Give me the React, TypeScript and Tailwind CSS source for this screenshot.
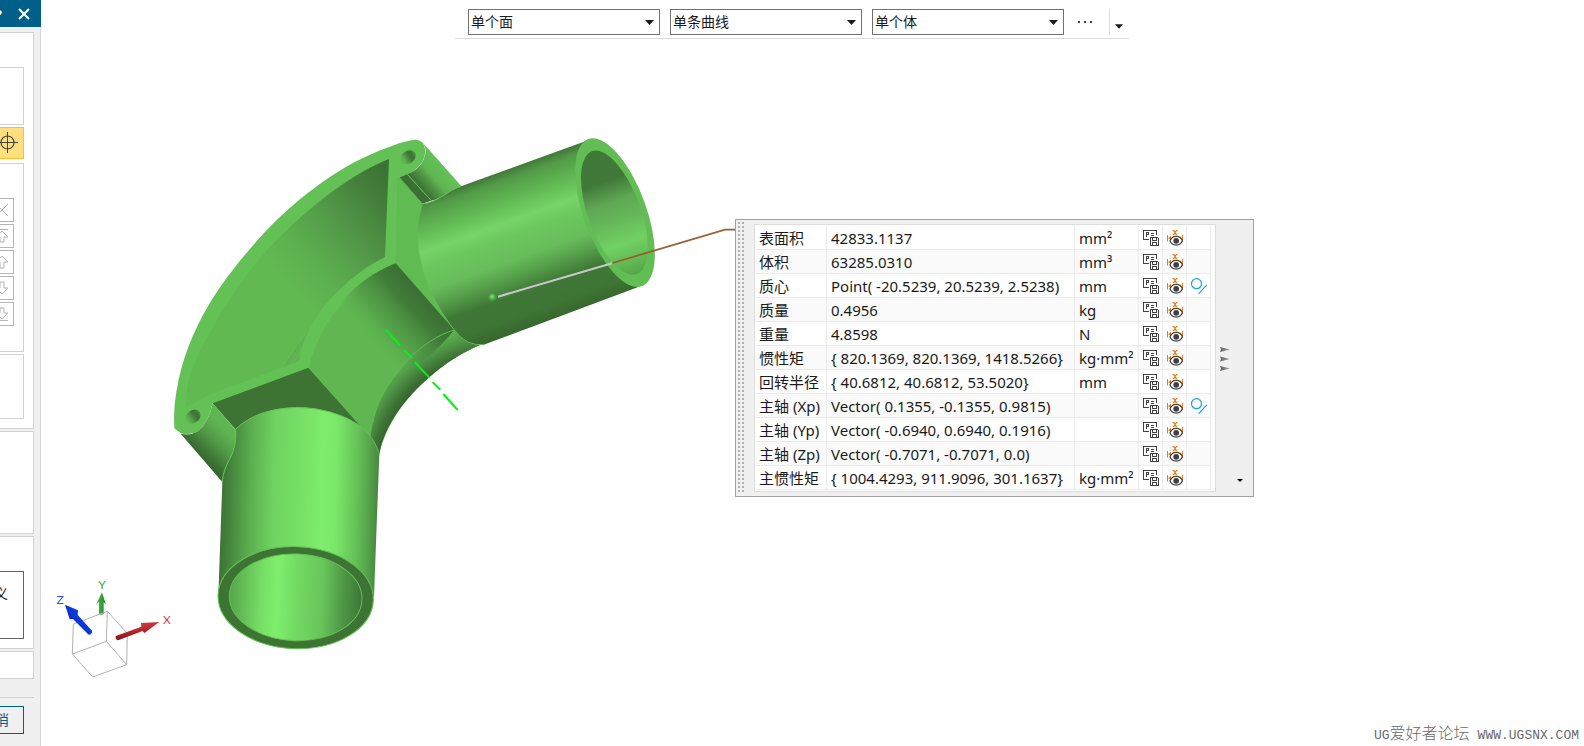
import type { ReactNode } from 'react';

interface Measure {
  name: string;
  value: string;
  unit: string;
  geometry?: boolean;
}

const measures: Measure[] = [
  { name: '表面积', value: '42833.1137', unit: 'mm²' },
  { name: '体积', value: '63285.0310', unit: 'mm³' },
  { name: '质心', value: 'Point( -20.5239, 20.5239, 2.5238)', unit: 'mm', geometry: true },
  { name: '质量', value: '0.4956', unit: 'kg' },
  { name: '重量', value: '4.8598', unit: 'N' },
  { name: '惯性矩', value: '{ 820.1369, 820.1369, 1418.5266}', unit: 'kg·mm²' },
  { name: '回转半径', value: '{ 40.6812, 40.6812, 53.5020}', unit: 'mm' },
  { name: '主轴 (Xp)', value: 'Vector( 0.1355, -0.1355, 0.9815)', unit: '', geometry: true },
  { name: '主轴 (Yp)', value: 'Vector( -0.6940, 0.6940, 0.1916)', unit: '' },
  { name: '主轴 (Zp)', value: 'Vector( -0.7071, -0.7071, 0.0)', unit: '' },
  { name: '主惯性矩', value: '{ 1004.4293, 911.9096, 301.1637}', unit: 'kg·mm²' },
];

const filters = [
  { label: '面规则', value: '单个面' },
  { label: '曲线规则', value: '单条曲线' },
  { label: '体规则', value: '单个体' },
];

/* ---------- icons ---------- */

function SaveExpressionIcon() {
  return (
    <svg width="16" height="16" viewBox="0 0 16 16" fill="none" stroke="#404040" shapeRendering="crispEdges">
      <path d="M6 9.500H.5V.5h13V5" />
      <path d="M3.500 7V2.500h2v2h-2M8 3.500h3M8 5.500h3" />
      <path d="M7.500 7.500h7l1 1v7h-8z" fill="#fff" />
      <path d="M9.500 8v2.500h4V8M9.500 15v-2.500h4V15" />
    </svg>
  );
}

function ShowDimensionIcon() {
  return (
    <svg width="16" height="16" viewBox="0 0 16 16" fill="none">
      <path d="M5.500.6h1.300l2.200 3.800h1.300M10.500.6H9.200L7 4.400H5.700" stroke="#e57c16" strokeWidth="1.100" />
      <path d="M.5 5v6.500M15.500 5v6.500" stroke="#e57c16" />
      <path d="M1 8.200l3-2.400v4.200zM15 8.200l-2-2v4z" fill="#e57c16" />
      <path d="M3 10.800C5.200 5 13 5 15.400 10.800c-2.400 5.700-10.200 5.700-12.400 0z" fill="#fff" stroke="#404040" strokeWidth="1.200" />
      <circle cx="9.200" cy="10.800" r="2.900" fill="#404040" />
    </svg>
  );
}

function GeometryIcon() {
  return (
    <svg width="16" height="16" viewBox="0 0 16 16" fill="none" stroke="#18a8ce" strokeWidth="1.200">
      <circle cx="5.500" cy="5.700" r="5" />
      <path d="M7.600 15.800L15.800 6.800" />
    </svg>
  );
}

function Caret({ className }: { className?: string }) {
  return (
    <svg width="9" height="5" viewBox="0 0 9 5" className={className}>
      <path d="M0 0h9L4.500 5z" fill="#1a1a1a" />
    </svg>
  );
}

/* ---------- dialog at the left edge ---------- */

function OrderButton({ label, children }: { label: string; children: ReactNode }) {
  return (
    <button type="button" aria-label={label} className="flex h-6 w-6 shrink-0 items-center justify-center border border-[#b4b4b4] bg-white">
      <svg width="16" height="16" viewBox="0 0 16 16" fill="none" stroke="#b4b4b4" strokeWidth="1">
        {children}
      </svg>
    </button>
  );
}

function SidePanel() {
  return (
    <aside className="flex w-[41px] shrink-0 flex-col overflow-hidden bg-[#f0f0f0]">
      <div className="flex h-[27px] shrink-0 items-center justify-end gap-4 bg-[#006089] pr-[11px] text-white">
        <button type="button" className="text-[15px] leading-4 font-bold">?</button>
        <button type="button" aria-label="关闭">
          <svg width="12" height="12" viewBox="0 0 12 12" stroke="#fff" strokeWidth="2">
            <path d="M1 1l10 10M11 1L1 11" />
          </svg>
        </button>
      </div>

      <div className="flex grow flex-col border-r border-[#d7d7d7] pt-[5px] pr-[6px]">
        <section className="flex h-[397px] flex-col items-end border-y border-r border-[#d2d2d2] bg-white pt-[34px] pr-[9px]">
          <div className="h-[58px] w-full border-y border-r border-[#d2d2d2]" />
          <button type="button" aria-label="指定点" className="mt-0.5 flex h-8 w-8 shrink-0 items-center justify-center border border-[#ffbe28] bg-[#ffdf7d]">
            <svg width="22" height="22" viewBox="0 0 22 22" fill="none" stroke="#444">
              <circle cx="10.500" cy="10.500" r="6.500" strokeWidth="1.200" />
              <path d="M0 10.500h21M10.500 0v21" />
            </svg>
          </button>
          <div className="mt-1 flex h-[189px] w-full flex-col items-end gap-0.5 border-y border-r border-[#d2d2d2] pt-[34px] pr-[9px]">
            <OrderButton label="移除">
              <path d="M2 2l12 12M14 2L2 14" />
            </OrderButton>
            <OrderButton label="移至顶部">
              <path d="M2 1.500h12M8 3l6 6h-4v5H6V9H2z" />
            </OrderButton>
            <OrderButton label="上移">
              <path d="M8 2l6 6h-4v6H6V8H2z" />
            </OrderButton>
            <OrderButton label="下移">
              <path d="M8 14l6-6h-4V2H6v6H2z" />
            </OrderButton>
            <OrderButton label="移至底部">
              <path d="M2 14.500h12M8 13l6-6h-4V2H6v5H2z" />
            </OrderButton>
          </div>
          <div className="mt-0.5 h-[65px] w-full border-y border-r border-[#d2d2d2]" />
        </section>

        <section className="mt-0.5 h-[103px] border-y border-r border-[#d2d2d2] bg-white" />

        <section className="mt-0.5 h-[113px] border-y border-r border-[#d2d2d2] bg-white pt-[34px] pr-[9px]">
          <div className="flex h-[68px] justify-end border-y border-r border-[#646464] pt-3 pr-[15px] text-sm text-[#1a1a1a]">义</div>
        </section>

        <section className="mt-0.5 h-7 border-y border-r border-[#d2d2d2] bg-white" />

        <hr className="mt-[18px] border-[#d2d2d2]" />
        <div className="mt-2 flex justify-end pr-[10px]">
          <button type="button" className="h-7 shrink-0 border border-[#006089] px-[14px] text-sm whitespace-nowrap text-[#006089]">
            取消
          </button>
        </div>
      </div>
    </aside>
  );
}

/* ---------- selection bar ---------- */

function SelectionBar() {
  return (
    <div className="relative flex justify-center pr-[41px]">
      <div className="flex items-center border-b border-[#dadada] pt-[9px] pr-1.5 pb-[3px] pl-[13px]">
        <div className="flex gap-[10px]">
          {filters.map((filter) => (
            <div key={filter.value} className="relative">
              <select
                aria-label={filter.label}
                className="block h-[26px] w-48 appearance-none border border-[#707070] bg-white pl-0.5 text-sm leading-5 text-[#1a1a1a]"
              >
                <option>{filter.value}</option>
              </select>
              <Caret className="pointer-events-none absolute top-[11px] right-1.5" />
            </div>
          ))}
        </div>
        <button type="button" aria-label="更多" className="flex h-[26px] w-[45px] items-center pl-[14px]">
          <svg width="15" height="2" viewBox="0 0 15 2" fill="#444">
            <path d="M0 0h2v2H0zM6 0h2v2H6zM12 0h2v2h-2z" />
          </svg>
        </button>
        <button type="button" aria-label="工具条选项" className="flex h-[26px] items-end border-l border-[#dadada] pb-1.5 pl-[5px]">
          <Caret className="w-[8px]" />
        </button>
      </div>
    </div>
  );
}

/* ---------- solid body, with the centroid leader ---------- */

function ElbowModel() {
  return (
    <svg className="absolute top-[130px] left-[129px]" width="570" height="540" viewBox="0 0 1710 1620" role="img" aria-label="弯管实体">
      <defs>
        <linearGradient id="pocket" gradientUnits="userSpaceOnUse" x1="690" y1="130" x2="330" y2="430">
          <stop offset="0" stopColor="#3a6f33" />
          <stop offset=".22" stopColor="#437e3a" />
          <stop offset=".5" stopColor="#529848" />
          <stop offset=".8" stopColor="#5db04f" />
          <stop offset="1" stopColor="#61b952" />
        </linearGradient>
        <linearGradient id="elbowShade" gradientUnits="userSpaceOnUse" x1="765" y1="500" x2="600" y2="645">
          <stop offset="0" stopColor="#3a6f33" />
          <stop offset=".25" stopColor="#3f7937" stopOpacity=".95" />
          <stop offset=".65" stopColor="#4f9545" stopOpacity=".6" />
          <stop offset="1" stopColor="#60b751" stopOpacity="0" />
        </linearGradient>
        <radialGradient id="throat" gradientUnits="userSpaceOnUse" cx="1010" cy="1060" r="500">
          <stop offset=".76" stopColor="#335d2c" />
          <stop offset=".82" stopColor="#3d7235" />
          <stop offset=".89" stopColor="#4f9646" />
          <stop offset=".96" stopColor="#5db14f" />
          <stop offset="1" stopColor="#60b751" />
        </radialGradient>
        <linearGradient id="pipeA" gradientUnits="userSpaceOnUse" x1="1060" y1="101" x2="1218" y2="539">
          <stop offset="0" stopColor="#41783a" />
          <stop offset=".06" stopColor="#529a47" />
          <stop offset=".2" stopColor="#62bb54" />
          <stop offset=".32" stopColor="#76d468" />
          <stop offset=".42" stopColor="#6bc75d" />
          <stop offset=".56" stopColor="#68bd5b" />
          <stop offset=".66" stopColor="#57a04c" />
          <stop offset=".78" stopColor="#3f7836" />
          <stop offset=".92" stopColor="#3d7534" />
          <stop offset="1" stopColor="#38682f" />
        </linearGradient>
        {/* turned back by 70°, because the bore's ellipse is itself turned */}
        <linearGradient id="boreA" gradientUnits="userSpaceOnUse" x1="1270" y1="65" x2="1400" y2="430" gradientTransform="rotate(-70 1333 248)">
          <stop offset="0" stopColor="#3f7837" />
          <stop offset=".25" stopColor="#41793a" />
          <stop offset=".42" stopColor="#5fa855" />
          <stop offset=".55" stopColor="#64b657" />
          <stop offset=".75" stopColor="#71d163" />
          <stop offset=".9" stopColor="#61b954" />
          <stop offset="1" stopColor="#56a54a" />
        </linearGradient>
        <linearGradient id="pipeB" gradientUnits="userSpaceOnUse" x1="150" y1="1100" x2="624" y2="1112">
          <stop offset="0" stopColor="#3c7035" />
          <stop offset=".08" stopColor="#478a3f" />
          <stop offset=".2" stopColor="#5db150" />
          <stop offset=".34" stopColor="#6fd360" />
          <stop offset=".5" stopColor="#76df66" />
          <stop offset=".64" stopColor="#7eec6c" />
          <stop offset=".73" stopColor="#7be86a" />
          <stop offset=".86" stopColor="#66c358" />
          <stop offset=".95" stopColor="#549f49" />
          <stop offset="1" stopColor="#478840" />
        </linearGradient>
        <linearGradient id="boreB" gradientUnits="userSpaceOnUse" x1="178" y1="1400" x2="577" y2="1404">
          <stop offset="0" stopColor="#57a44b" />
          <stop offset=".1" stopColor="#63bc55" />
          <stop offset=".24" stopColor="#75df65" />
          <stop offset=".36" stopColor="#7fee6d" />
          <stop offset=".5" stopColor="#73da63" />
          <stop offset=".7" stopColor="#67c559" />
          <stop offset=".86" stopColor="#4e9545" />
          <stop offset="1" stopColor="#3e7636" />
        </linearGradient>
        <linearGradient id="lugA" gradientUnits="userSpaceOnUse" x1="748" y1="172" x2="818" y2="110">
          <stop offset="0" stopColor="#3b7033" />
          <stop offset=".3" stopColor="#4d9143" />
          <stop offset=".55" stopColor="#5fb551" />
          <stop offset="1" stopColor="#64c156" />
        </linearGradient>
        <linearGradient id="lugB" gradientUnits="userSpaceOnUse" x1="92" y1="985" x2="172" y2="905">
          <stop offset="0" stopColor="#366530" />
          <stop offset=".25" stopColor="#3f7937" />
          <stop offset=".6" stopColor="#529a48" />
          <stop offset="1" stopColor="#5fb651" />
        </linearGradient>
        <linearGradient id="hole">
          <stop offset="0" stopColor="#63bf55" />
          <stop offset=".25" stopColor="#5cab4f" />
          <stop offset=".6" stopColor="#417939" />
          <stop offset=".8" stopColor="#3f7537" />
          <stop offset="1" stopColor="#519747" />
        </linearGradient>
        <radialGradient id="ball" cx=".4" cy=".35" r=".6">
          <stop offset="0" stopColor="#86e676" />
          <stop offset=".5" stopColor="#52a846" />
          <stop offset="1" stopColor="#357a2d" />
        </radialGradient>
      </defs>

      {/* flange face */}
      <path
        d="M735 29C700 32 640 56 600 74C470 130 335 245 250 345C140 470 20 640 12 862L13 895L32 910Q60 918 85 903Q115 880 128 820L197 900L400 870L570 887L628 970C650 880 710 800 776 743C825 700 880 665 930 645L853 600L745 300L757 222L688 142Q735 130 757 95Q775 60 757 37Q748 28 735 29Z"
        fill="#64c156"
      />
      <path d="M682 144L677 400L853 600L930 645L743 300L757 222L688 142Z" fill="#61bb53" />

      {/* recess behind the elbow */}
      <path
        d="M657 87L645 382C560 420 470 510 432 572C405 620 392 655 388 692L338 712L128 790L47 832C44 780 62 700 130 590C190 480 270 375 345 305C450 205 560 125 657 87Z"
        fill="url(#pocket)"
      />
      <path d="M418 598C395 630 360 675 338 712L388 692Q392 650 418 598Z" fill="#5eb350" />
      <path d="M338 712Q380 640 418 598M362 700Q392 680 393 650" fill="none" stroke="#67c259" strokeWidth="2" />

      {/* elbow back and throat */}
      <path d="M677 400C590 435 500 530 460 600Q430 655 417 712L570 887L628 975C640 880 710 800 776 743C825 700 880 665 930 645L853 600Z" fill="#60b751" />
      <path d="M853 600C760 625 630 760 608 880L600 925L628 972C645 880 710 800 776 743C825 700 880 665 930 645Q890 640 853 600Z" fill="url(#throat)" />
      <path d="M677 400C590 435 540 485 510 520L660 745C730 720 785 680 853 600Z" fill="url(#elbowShade)" />
      <path d="M853 600C760 625 630 745 608 880" fill="none" stroke="#62bb54" strokeWidth="3" />

      {/* lower rib */}
      <path d="M128 820L415 713L570 887Q490 834 385 832Q260 835 197 898Z" fill="#3d7434" />

      {/* upper lug */}
      <path d="M688 142L712 133L784 212L757 221Z" fill="#3b6f33" />
      <path d="M712 133Q745 120 760 90Q774 60 759 39L874 168C840 178 820 205 784 212Z" fill="url(#lugA)" />
      <path d="M712 133L784 212" stroke="#64c156" strokeWidth="3" />
      <ellipse cx="714" cy="82" rx="25" ry="19" transform="rotate(-35 714 82)" fill="url(#hole)" />

      {/* lower lug */}
      <path d="M128 820L197 900Q200 950 180 985Q158 1025 157 1056L32 911Q60 918 85 903Q115 880 128 820Z" fill="url(#lugB)" />
      <ellipse cx="69" cy="860" rx="25" ry="19" transform="rotate(-35 69 860)" fill="url(#hole)" />

      {/* right pipe */}
      <path
        d="M873 169L1250 32L1403 472L945 643Q890 655 853 600C790 520 708 370 757 222C810 215 830 182 873 169Z"
        fill="url(#pipeA)"
      />
      <path d="M945 643Q890 652 853 600C790 520 708 370 757 222C810 215 830 182 873 169" fill="none" stroke="#62bb54" strokeWidth="3" />
      <ellipse cx="1335" cy="248" rx="235" ry="94" transform="rotate(70 1335 248)" fill="#62bd54" />
      <ellipse cx="1333" cy="248" rx="196" ry="79" transform="rotate(70 1333 248)" fill="url(#boreA)" />

      {/* lower pipe */}
      <path
        d="M197 898Q260 835 385 832Q490 834 570 887Q615 925 628 972L612 1400L145 1400L157 1056Q158 1025 180 985Q200 950 197 898Z"
        fill="url(#pipeB)"
      />
      <path d="M157 1056Q158 1025 180 985Q200 950 197 898Q260 835 385 832Q490 834 570 887Q615 925 628 972" fill="none" stroke="#64c156" strokeWidth="3" />
      <ellipse cx="377" cy="1403" rx="233" ry="153" transform="rotate(2 377 1403)" fill="#3d7434" stroke="#64c156" strokeWidth="3" />
      <ellipse cx="377" cy="1402" rx="199" ry="130" transform="rotate(2 377 1402)" fill="url(#boreB)" stroke="#64c156" strokeWidth="3" />

      {/* rotation axis */}
      <path
        d="M648 600L691 646M701 660L726 684M734 696L778 743M788 757L811 779M820 792L863 840"
        stroke="#00f514"
        strokeWidth="6"
      />

      {/* centroid leader */}
      <path d="M984 500L1326 400" stroke="#c9c9c9" strokeWidth="6" />
      <path d="M1328 399L1455 361" stroke="#9c5a26" strokeWidth="5" />
      <path d="M1455 361L1665 299H1698" fill="none" stroke="#9c6236" strokeWidth="5" />
      <circle cx="969" cy="504" r="14" fill="url(#ball)" />
    </svg>
  );
}

function ViewTriad() {
  return (
    <svg className="absolute top-[570px] left-0" width="140" height="120" viewBox="3 0 420 360" role="img" aria-label="视图坐标系">
      <defs>
        <linearGradient id="axisX" x1="0" y1="0" x2=".3" y2="1">
          <stop offset="0" stopColor="#d24a4a" />
          <stop offset=".5" stopColor="#c02a2c" />
          <stop offset="1" stopColor="#701416" />
        </linearGradient>
        <linearGradient id="axisY">
          <stop offset="0" stopColor="#3fb23f" />
          <stop offset=".5" stopColor="#3aa63a" />
          <stop offset="1" stopColor="#237a26" />
        </linearGradient>
        <linearGradient id="axisZ" x1="1" y1="0" x2="0" y2="1">
          <stop offset="0" stopColor="#0a46f0" />
          <stop offset=".5" stopColor="#0838d8" />
          <stop offset="1" stopColor="#041c80" />
        </linearGradient>
      </defs>
      <path d="M177 132V95L168 104L186 67L198 104L191 96V132Q184 136 177 132Z" fill="url(#axisY)" />
      <path
        d="M97 252L100 162L202 124L262 190L260 284L158 321L97 252L199 214L260 284M199 214L202 124"
        fill="none"
        stroke="#b2b2b2"
        strokeWidth="3"
      />
      <path d="M227 198L304 170L303 159L358 156L313 189L308 183L234 211Q225 208 227 198Z" fill="url(#axisX)" />
      <path d="M75 104L114 121L113 135L156 182Q157 193 146 194L99 147L89 148Z" fill="url(#axisZ)" />
      <g fontFamily="Lato, 'Noto Sans', sans-serif" fontSize="36" textAnchor="middle">
        <text x="186" y="57" fill="#3ca83c">Y</text>
        <text x="60" y="102" fill="#2c50f0">Z</text>
        <text x="381" y="161" fill="#d04448">X</text>
      </g>
    </svg>
  );
}

/* ---------- measurement result box ---------- */

function MeasurePanel() {
  return (
    <div className="absolute top-[219px] left-[694px] flex border border-[#a0a0a0] bg-[#f0f0f0] py-1 pr-[3px] pl-0.5">
      <svg width="8" className="-my-0.5 mr-2" height="272" shapeRendering="crispEdges">
        <defs>
          <pattern id="grip" width="4" height="4" patternUnits="userSpaceOnUse">
            <rect width="2" height="2" fill="#b0b0b0" />
          </pattern>
        </defs>
        <rect width="7" height="272" fill="url(#grip)" />
      </svg>

      <div className="border border-[#dcdcdc] bg-white py-px pr-1 pl-px">
        <table className="border-separate border-spacing-0 text-[15px] leading-5 whitespace-nowrap text-[#1a1a1a] [&_td]:border-r [&_td]:border-b [&_td]:border-[#ebebeb] [&_th]:border-r [&_th]:border-b [&_th]:border-[#ebebeb]">
          <colgroup>
            <col className="w-[71px]" />
            <col className="w-[248px]" />
            <col className="w-16" />
            <col className="w-6" />
            <col className="w-6" />
            <col className="w-6" />
          </colgroup>
          <tbody>
            {measures.map((measure) => (
              <tr key={measure.name} className="h-6 even:bg-[#fafafa]">
                <th scope="row" className="p-0 pl-[3px] text-left font-normal">
                  {measure.name}
                </th>
                <td className="p-0 pl-1">{measure.value}</td>
                <td className="p-0 pl-1">{measure.unit}</td>
                <td className="p-0 pt-1 pl-1 align-top">
                  <button type="button" aria-label="保存表达式" className="block">
                    <SaveExpressionIcon />
                  </button>
                </td>
                <td className="p-0 pt-1 pl-1 align-top">
                  <button type="button" aria-label="显示尺寸" className="block">
                    <ShowDimensionIcon />
                  </button>
                </td>
                <td className="p-0 pt-1 pl-1 align-top">
                  {measure.geometry && (
                    <button type="button" aria-label="创建几何体" className="block">
                      <GeometryIcon />
                    </button>
                  )}
                </td>
              </tr>
            ))}
          </tbody>
        </table>
      </div>

      <div className="flex w-[34px] flex-col justify-between pl-1">
        <span />
        <svg width="10" height="24" viewBox="0 0 10 24" className="mt-3.5">
          <defs>
            <linearGradient id="arrow">
              <stop offset="0" stopColor="#606060" />
              <stop offset="1" stopColor="#a8a8a8" />
            </linearGradient>
          </defs>
          <path d="M0 0l10 2.500L0 5l1-2.500zM0 9.500l10 2.500-10 2.500 1-2.500zM0 19l10 2.500L0 24l1-2.500z" fill="url(#arrow)" />
        </svg>
        <button type="button" aria-label="选项" className="mb-[10px] self-end pr-[7px]">
          <svg width="6" height="3" viewBox="0 0 6 3">
            <path d="M0 0h6L3 3z" fill="#000" />
          </svg>
        </button>
      </div>
    </div>
  );
}

export default function App() {
  return (
    <div className="flex min-h-screen overflow-hidden bg-white font-['Noto_Sans','Noto_Sans_CJK_SC',sans-serif]">
      <SidePanel />
      <main className="relative min-w-0 grow">
        <ElbowModel />
        <ViewTriad />
        <SelectionBar />
        <MeasurePanel />
        <p className="absolute right-[5px] bottom-0.5 flex items-baseline gap-2 font-['Liberation_Mono','Noto_Sans_CJK_SC',monospace] text-[13px] leading-4 text-[#6a6a6a]">
          <span>
            UG<span className="text-base leading-4 font-light">爱好者论坛</span>
          </span>
          <span>WWW.UGSNX.COM</span>
        </p>
      </main>
    </div>
  );
}
